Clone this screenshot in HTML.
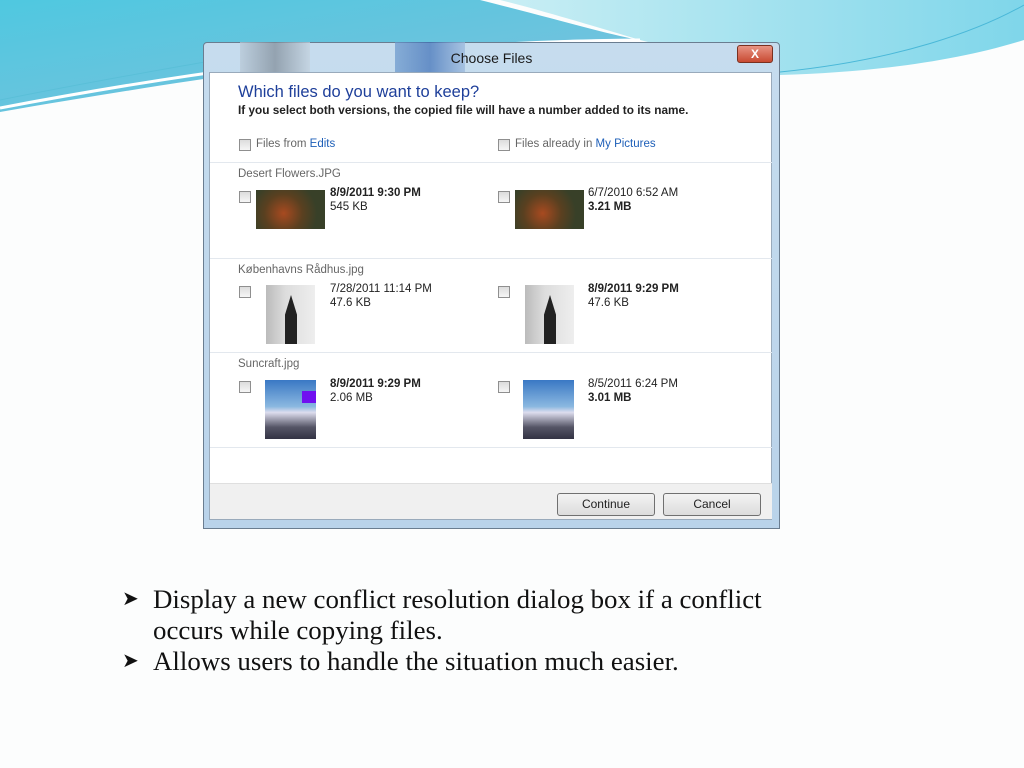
<!DOCTYPE html>
<html><head><meta charset="utf-8"><style>
*{margin:0;padding:0;box-sizing:border-box}
body{width:1024px;height:768px;position:relative;overflow:hidden;background:#fcfdfd;font-family:"Liberation Sans",sans-serif}
.a{position:absolute}
.s{font-size:11.5px;color:#222;white-space:nowrap}
.g{color:#666}
.b{font-weight:bold}
.cb{position:absolute;width:12px;height:12px;border:1px solid #8f8f8f;background:linear-gradient(#ddd,#f6f6f6)}
.sep{position:absolute;left:210px;width:562px;height:1px;background:#e3e8ee}
.btn{position:absolute;top:493px;height:23px;width:98px;border:1px solid #707070;border-radius:3px;background:linear-gradient(#f3f3f3,#dcdcdc);font-size:12px;text-align:center;line-height:21px;color:#222}
.t{font-family:"Liberation Serif",serif;font-size:26.9px;color:#111;position:absolute;white-space:nowrap}
</style></head><body>
<svg class="a" style="left:0;top:0" width="1024" height="130">
<defs>
<linearGradient id="l" x1="0" y1="0" x2="1" y2="1"><stop offset="0" stop-color="#4fc8e0"/><stop offset="1" stop-color="#7fc0dc"/></linearGradient>
<linearGradient id="r" x1="0" y1="0" x2="1" y2="0"><stop offset="0" stop-color="#c9eef4"/><stop offset="1" stop-color="#7fd6ea"/></linearGradient>
</defs>
<path d="M0 0H480C560 20 610 35 640 40C520 35 300 60 0 112Z" fill="url(#l)"/>
<path d="M500 0H1024V40C960 60 880 72 780 75L640 40C590 25 540 10 500 0Z" fill="url(#r)"/>
<path d="M0 108C200 70 400 42 640 40" stroke="#fff" stroke-width="3" fill="none"/>
<path d="M780 72C900 60 980 30 1024 5" stroke="#4ab8d8" stroke-width="1" fill="none"/>
<path d="M0 100C100 80 160 70 205 62" stroke="#5abfd8" stroke-width="1" fill="none"/>
</svg>
<div class="a" style="left:203px;top:42px;width:577px;height:487px;background:linear-gradient(#c6dcee,#b9d3ea);border:1px solid #6a7d90;border-radius:4px 4px 0 0"></div>
<div class="a" style="left:240px;top:42px;width:70px;height:30px;background:linear-gradient(90deg,#b8c8d6,#7e8a96,#c4d2de);opacity:.7"></div>
<div class="a" style="left:395px;top:42px;width:70px;height:30px;background:linear-gradient(90deg,#6a98cc,#3d6fb6,#9ab8dc);opacity:.7"></div>
<div class="a s" style="left:0;width:983px;text-align:center;top:50px;font-size:14px;color:#1a1a1a">Choose Files</div>
<div class="a" style="left:737px;top:45px;width:36px;height:18px;border-radius:3px;background:linear-gradient(#e89484,#c84a32);border:1px solid #7a3020;color:#fff;font-size:12px;font-weight:bold;text-align:center;line-height:16px">X</div>
<div class="a" style="left:209px;top:72px;width:563px;height:448px;background:#fff;border:1px solid #9ab"></div>
<div class="a" style="left:210px;top:483px;width:562px;height:36px;background:#f0f0f0;border-top:1px solid #dfdfdf"></div>
<div class="a" style="left:238px;top:83px;font-size:16.5px;color:#1e3f9a;white-space:nowrap">Which files do you want to keep?</div>
<div class="a s b" style="left:238px;top:103px;font-size:11.8px">If you select both versions, the copied file will have a number added to its name.</div>
<div class="cb" style="left:239px;top:139px"></div><div class="a s g" style="left:256px;top:138px">Files from <span style="color:#1e5fb8">Edits</span></div>
<div class="cb" style="left:498px;top:139px"></div><div class="a s g" style="left:515px;top:138px">Files already in <span style="color:#1e5fb8">My Pictures</span></div>
<div class="sep" style="top:162px"></div>
<div class="a s g" style="left:238px;top:168px">Desert Flowers.JPG</div>
<div class="cb" style="left:239px;top:191px"></div>
<div class="a" style="left:256px;top:190px;width:69px;height:39px;background:radial-gradient(circle at 40% 60%,#a84a20,#5a4020 40%,#384028 70%),#4a4028"></div>
<div class="a s b" style="left:330px;top:187px">8/9/2011 9:30 PM</div><div class="a s" style="left:330px;top:201px">545 KB</div>
<div class="cb" style="left:498px;top:191px"></div>
<div class="a" style="left:515px;top:190px;width:69px;height:39px;background:radial-gradient(circle at 40% 60%,#a84a20,#5a4020 40%,#384028 70%),#4a4028"></div>
<div class="a s" style="left:588px;top:187px">6/7/2010 6:52 AM</div><div class="a s b" style="left:588px;top:201px">3.21 MB</div>
<div class="sep" style="top:258px"></div>
<div class="a s g" style="left:238px;top:264px">Københavns Rådhus.jpg</div>
<div class="cb" style="left:239px;top:286px"></div>
<div class="a" style="left:266px;top:285px;width:49px;height:59px;background:linear-gradient(90deg,#bbb,#ddd 40%,#eee)"></div>
<div class="a" style="left:285px;top:295px;width:12px;height:49px;background:#222;clip-path:polygon(50% 0,100% 40%,100% 100%,0 100%,0 40%)"></div>
<div class="a s" style="left:330px;top:283px">7/28/2011 11:14 PM</div><div class="a s" style="left:330px;top:297px">47.6 KB</div>
<div class="cb" style="left:498px;top:286px"></div>
<div class="a" style="left:525px;top:285px;width:49px;height:59px;background:linear-gradient(90deg,#bbb,#ddd 40%,#eee)"></div>
<div class="a" style="left:544px;top:295px;width:12px;height:49px;background:#222;clip-path:polygon(50% 0,100% 40%,100% 100%,0 100%,0 40%)"></div>
<div class="a s b" style="left:588px;top:283px">8/9/2011 9:29 PM</div><div class="a s" style="left:588px;top:297px">47.6 KB</div>
<div class="sep" style="top:352px"></div>
<div class="a s g" style="left:238px;top:358px">Suncraft.jpg</div>
<div class="cb" style="left:239px;top:381px"></div>
<div class="a" style="left:265px;top:380px;width:51px;height:59px;background:linear-gradient(#3a78c4,#8ab8e0 45%,#dde 55%,#556 80%,#334)"></div>
<div class="a" style="left:302px;top:391px;width:14px;height:12px;background:#7010f0"></div>
<div class="a s b" style="left:330px;top:378px">8/9/2011 9:29 PM</div><div class="a s" style="left:330px;top:392px">2.06 MB</div>
<div class="cb" style="left:498px;top:381px"></div>
<div class="a" style="left:523px;top:380px;width:51px;height:59px;background:linear-gradient(#3a78c4,#8ab8e0 45%,#dde 55%,#556 80%,#334)"></div>
<div class="a s" style="left:588px;top:378px">8/5/2011 6:24 PM</div><div class="a s b" style="left:588px;top:392px">3.01 MB</div>
<div class="sep" style="top:447px"></div>
<div class="btn" style="left:557px">Continue</div>
<div class="btn" style="left:663px">Cancel</div>
<div class="t" style="left:122px;top:586px;font-size:20px">&#10148;</div>
<div class="t" style="left:153px;top:584px">Display a new conflict resolution dialog box if a conflict</div>
<div class="t" style="left:153px;top:615px">occurs while copying files.</div>
<div class="t" style="left:122px;top:648px;font-size:20px">&#10148;</div>
<div class="t" style="left:153px;top:646px">Allows users to handle the situation much easier.</div>
</body></html>
